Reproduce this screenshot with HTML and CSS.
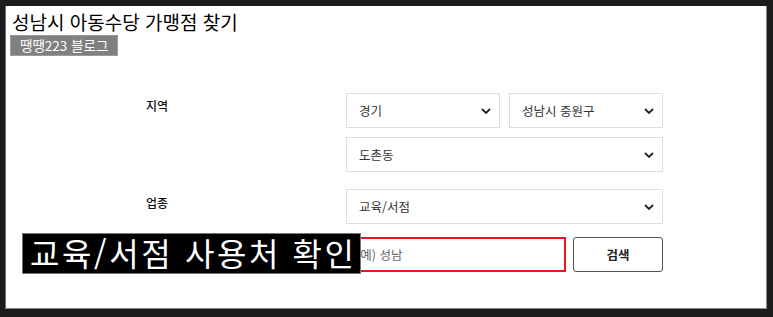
FILE: index.html
```html
<!DOCTYPE html>
<html lang="ko">
<head>
<meta charset="utf-8">
<link rel="stylesheet" href="styles.css">
</head>
<body>
<div class="frame">
  <h1 class="title">성남시 아동수당 가맹점 찾기</h1>
  <div class="badge">땡땡223 블로그</div>
  <div class="form">
    <div class="label l1">지역</div>
    <div class="fields">
      <div class="pair">
        <div class="select"><span>경기</span><svg class="chev" viewBox="0 0 10 6" width="10" height="6"><path d="M1 1l4 4 4-4" fill="none" stroke="#222" stroke-width="1.8"/></svg></div>
        <div class="select"><span>성남시 중원구</span><svg class="chev" viewBox="0 0 10 6" width="10" height="6"><path d="M1 1l4 4 4-4" fill="none" stroke="#222" stroke-width="1.8"/></svg></div>
      </div>
      <div class="select"><span>도촌동</span><svg class="chev" viewBox="0 0 10 6" width="10" height="6"><path d="M1 1l4 4 4-4" fill="none" stroke="#222" stroke-width="1.8"/></svg></div>
    </div>
    <div class="label l2">업종</div>
    <div class="fields">
      <div class="select"><span>교육/서점</span><svg class="chev" viewBox="0 0 10 6" width="10" height="6"><path d="M1 1l4 4 4-4" fill="none" stroke="#222" stroke-width="1.8"/></svg></div>
      <div class="search">
        <div class="input">(예) 성남</div>
        <div class="btn">검색</div>
      </div>
    </div>
  </div>
  <div class="overlay">교육/서점 사용처 확인</div>
</div>
</body>
</html>
```
FILE: styles.css
```css
html, body {
  margin: 0;
  padding: 0;
  background: #1c1c1c;
  font-family: "Noto Sans CJK KR", "Noto Sans", sans-serif;
}
.frame {
  position: relative;
  margin: 6px 6px 0 5px;
  height: 303px;
  background: #fff;
  border-left: 1px solid #6e6e6e;
  border-right: 1px solid #8a8a8a;
  border-bottom: 1px solid #8a8a8a;
  box-sizing: border-box;
  padding: 5px 0 0 6px;
}
.title {
  margin: 0;
  font-size: 19px;
  font-weight: normal;
  line-height: 22px;
  color: #000;
}
.badge {
  width: fit-content;
  margin-top: 2px;
  margin-left: -2px;
  background: #808080;
  border: 1px solid #9a9a9a;
  color: #fff;
  font-size: 13.5px;
  line-height: 19px;
  padding: 0 9px;
}
.form {
  display: grid;
  grid-template-columns: 334px 317px;
  row-gap: 17px;
  margin-top: 37px;
}
.label {
  padding-left: 134px;
  font-size: 12px;
  color: #111;
  font-weight: 500;
}
.l1 { padding-top: 4px; }
.l2 { padding-top: 5px; }
.fields {
  display: flex;
  flex-direction: column;
  gap: 9px;
}
.pair {
  display: grid;
  grid-template-columns: 1fr 1fr;
  gap: 9px;
}
.select {
  height: 35px;
  box-sizing: border-box;
  border: 1px solid #e2dfd2;
  display: flex;
  align-items: center;
  justify-content: space-between;
  padding: 0 8px 0 12px;
  font-size: 12.5px;
  color: #333;
}
.chev { display: block; }
.search {
  display: flex;
  gap: 7px;
  margin-top: 4px;
}
.input {
  flex: 1;
  height: 35px;
  box-sizing: border-box;
  border: 2px solid #e8161b;
  display: flex;
  align-items: center;
  padding-left: 8px;
  font-size: 12.5px;
  color: #666;
}
.btn {
  width: 90px;
  height: 35px;
  box-sizing: border-box;
  border: 1px solid #555;
  border-radius: 3px;
  display: flex;
  align-items: center;
  justify-content: center;
  font-size: 12.5px;
  font-weight: bold;
  color: #222;
}
.overlay {
  position: absolute;
  left: 16px;
  top: 227px;
  width: 339px;
  height: 41px;
  box-sizing: border-box;
  background: #000;
  border: 1px solid #777;
  color: #fff;
  font-size: 32px;
  line-height: 37px;
  padding-left: 7px;
  letter-spacing: 2.6px;
  white-space: nowrap;
}
```
